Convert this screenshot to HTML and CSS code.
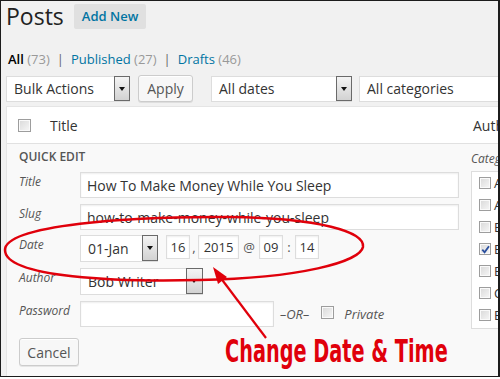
FILE: index.html
```html
<!DOCTYPE html>
<html lang="en">
<head>
  <meta charset="UTF-8">
  <title>Posts - Quick Edit</title>
  <link rel="stylesheet" href="styles.css">
</head>
<body>

  <div class="frame">
    <div class="wrap">

      <div class="page-title">
        <h2>Posts</h2>
        <a class="add-new" href="#">Add New</a>
      </div>

      <ul class="subsubsub">
        <li class="current">All <span class="count">(73)</span></li>
        <li class="sep">|</li>
        <li><a href="#">Published</a> <span class="count">(27)</span></li>
        <li class="sep">|</li>
        <li><a href="#">Drafts</a> <span class="count">(46)</span></li>
      </ul>

      <div class="tablenav">
        <div class="select bulk"><span class="val">Bulk Actions</span><span class="drop"></span></div>
        <button class="button apply">Apply</button>
        <div class="select dates"><span class="val">All dates</span><span class="drop"></span></div>
        <div class="select cats"><span class="val">All categories</span></div>
      </div>

      <div class="posts-table">
        <div class="thead">
          <span class="cb"></span>
          <span class="col-title">Title</span>
          <span class="col-author">Author</span>
        </div>

        <div class="quick-edit">
          <div class="qe-left">
            <h4>Quick Edit</h4>

            <div class="qe-row">
              <label>Title</label>
              <input class="field wide" type="text" value="How To Make Money While You Sleep">
            </div>
            <div class="qe-row">
              <label>Slug</label>
              <input class="field wide" type="text" value="how-to-make-money-while-you-sleep">
            </div>
            <div class="qe-row tall date-row">
              <label>Date</label>
              <div class="select month"><span class="val">01-Jan</span><span class="drop"></span></div>
              <input class="field tiny day" type="text" value="16">
              <span class="punct comma">,</span>
              <input class="field tiny year" type="text" value="2015">
              <span class="punct at">@</span>
              <input class="field tiny" type="text" value="09">
              <span class="punct colon">:</span>
              <input class="field tiny" type="text" value="14">
            </div>
            <div class="qe-row tall">
              <label>Author</label>
              <div class="select author"><span class="val">Bob Writer</span><span class="drop"></span></div>
            </div>
            <div class="qe-row pass-row">
              <label>Password</label>
              <input class="field pass" type="text" value="">
              <em class="or">&ndash;OR&ndash;</em>
              <span class="cb"></span>
              <em class="private">Private</em>
            </div>

            <button class="button cancel">Cancel</button>
          </div>

          <div class="qe-right">
            <span class="qe-label">Categories</span>
            <ul class="cat-list">
              <li><span class="cb"></span>Affiliate Marketing</li>
              <li><span class="cb"></span>Articles</li>
              <li><span class="cb"></span>Blogging</li>
              <li><span class="cb checked"><svg viewBox="0 0 12 12" width="11" height="11"><path d="M2.5 6.2 L5 9 L9.8 2.4" fill="none" stroke="#2a4f9e" stroke-width="2"/></svg></span>Business</li>
              <li><span class="cb"></span>Books</li>
              <li><span class="cb"></span>Content</li>
              <li><span class="cb"></span>Beginners</li>
            </ul>
          </div>
        </div>
      </div>

    </div>

    <!-- red annotation drawn over the screenshot -->
    <svg class="annotation" width="500" height="379" viewBox="0 0 500 379">
      <path d="M5 250 C5 225, 130 216, 230 217 C320 218, 365 232, 363 247 C360 262, 300 278, 200 280 C120 282, 5 278, 5 250 Z"
            fill="none" stroke="#e0000b" stroke-width="2.5"/>
      <line x1="220" y1="277" x2="266" y2="338" stroke="#e0000b" stroke-width="2.2"/>
      <polygon points="213,267 227,277 218,284" fill="#e0000b"/>
    </svg>
    <div class="callout">Change Date &amp; Time</div>
  </div>

</body>
</html>
```

FILE: styles.css
```css
body {
  margin: 0;
  background: #fff;
  font-family: "Open Sans", "Liberation Sans", sans-serif;
  color: #333;
}

.frame {
  position: relative;
  width: 500px;
  height: 377px;
  box-sizing: border-box;
  border: 1px solid #1c1c1c;
  border-right-width: 2px;
  background: #f1f1f1;
  overflow: hidden;
}

.wrap {
  padding-left: 5px;
}

/* page title */
.page-title {
  display: flex;
  align-items: center;
  height: 30px;
}

.page-title h2 {
  margin: 0;
  font-size: 23px;
  font-weight: 400;
  line-height: 30px;
  color: #222;
}

.add-new {
  margin-left: 10px;
  padding: 0 8px;
  height: 25px;
  line-height: 25px;
  background: #e0e0e0;
  border-radius: 2px;
  font-size: 13px;
  font-weight: 600;
  color: #0074a2;
  text-decoration: none;
}

/* views */
.subsubsub {
  display: flex;
  margin: 18px 0 0 2px;
  padding: 0;
  list-style: none;
  font-size: 13px;
  line-height: 20px;
  color: #666;
}

.subsubsub li.current {
  color: #000;
  font-weight: 600;
}

.subsubsub li.current .count {
  font-weight: 400;
}

.subsubsub a {
  color: #0074a2;
  text-decoration: none;
}

.subsubsub .count {
  color: #999;
}

.subsubsub .sep {
  margin: 0 7px;
  color: #666;
}

/* toolbar */
.tablenav {
  display: flex;
  align-items: flex-end;
  margin-top: 6px;
  height: 27px;
}

.tablenav > * {
  flex: none;
}

.select {
  display: flex;
  box-sizing: border-box;
  height: 26px;
  background: #fff;
  border: 1px solid #ddd;
  border-right: none;
  font-size: 14px;
  color: #333;
}

.select .val {
  flex: 1;
  padding-left: 7px;
  line-height: 24px;
  white-space: nowrap;
}

.drop {
  position: relative;
  flex: none;
  width: 16px;
  margin-top: -1px;
  box-sizing: border-box;
  border: 1px solid #6a6a6a;
  background: linear-gradient(#f4f4f4, #d2d2d2);
}

.drop::after {
  content: "";
  position: absolute;
  left: 4px;
  top: 50%;
  margin-top: -2px;
  border-left: 3px solid transparent;
  border-right: 3px solid transparent;
  border-top: 4px solid #111;
}

.bulk { width: 124px; }
.dates { width: 141px; margin-left: 18px; }
.cats { width: 200px; margin-left: 7px; }

.button {
  box-sizing: border-box;
  padding: 0;
  background: #f7f7f7;
  border: 1px solid #ccc;
  border-radius: 3px;
  box-shadow: inset 0 1px 0 #fff, 0 1px 0 rgba(0,0,0,0.08);
  font-family: "Open Sans", "Liberation Sans", sans-serif;
  font-size: 14px;
  color: #555;
}

.apply {
  width: 55px;
  height: 27px;
  margin-left: 8px;
}

/* posts table */
.posts-table {
  margin-top: 4px;
  width: 720px;
  background: #fff;
  border: 1px solid #e5e5e5;
  border-bottom: none;
}

.thead {
  display: flex;
  align-items: center;
  height: 36px;
  border-bottom: 1px solid #e1e1e1;
  font-size: 14px;
  color: #333;
}

.thead .cb {
  margin-left: 11px;
}

.col-title {
  flex: none;
  width: 423px;
  margin-left: 19px;
}

.cb {
  display: inline-block;
  flex: none;
  position: relative;
  width: 13px;
  height: 13px;
  box-sizing: border-box;
  border: 1px solid #9d9d9d;
  box-shadow: inset 0 0 0 1px #fafafa;
  background: linear-gradient(135deg, #d9d9d9, #f7f7f7);
}

.cb svg {
  position: absolute;
  left: 0;
  top: 0;
}

/* quick edit */
.quick-edit {
  display: flex;
  height: 240px;
  padding: 5px 0 0 12px;
  background: #f9f9f9;
}

.qe-left {
  flex: none;
  width: 440px;
}

.qe-left h4 {
  margin: 0 0 7px;
  font-size: 12px;
  font-weight: 600;
  line-height: 16px;
  text-transform: uppercase;
  color: #555;
}

.qe-row {
  display: flex;
  align-items: flex-start;
  height: 26px;
  margin-bottom: 6px;
}

.qe-row.tall {
  height: 27px;
}

.qe-row:nth-of-type(2) {
  margin-bottom: 5px;
}

.pass-row {
  margin-bottom: 11px;
}

.qe-row label,
.qe-label {
  width: 61px;
  flex: none;
  padding-top: 2px;
  font-size: 12px;
  font-style: italic;
  line-height: 16px;
  color: #555;
}

.field {
  box-sizing: border-box;
  height: 26px;
  margin: 0;
  padding: 0 6px;
  background: #fff;
  border: 1px solid #ddd;
  box-shadow: inset 0 1px 2px rgba(0,0,0,0.07);
  font-family: "Open Sans", "Liberation Sans", sans-serif;
  font-size: 14px;
  color: #333;
  outline: none;
}

.field.wide {
  flex: 1;
  min-width: 0;
}

.field.tiny {
  flex: none;
  width: 24px;
  height: 24px;
  padding: 0;
  text-align: center;
  font-size: 13px;
}

.field.year {
  width: 41px;
}

.select.month {
  flex: none;
  width: 78px;
  height: 27px;
}

.select.author {
  flex: none;
  width: 123px;
  height: 27px;
}

.select.author .drop {
  width: 17px;
}

.select.month .val,
.select.author .val {
  line-height: 25px;
}

.day {
  margin-left: 8px;
}

.punct {
  flex: none;
  line-height: 24px;
  font-size: 13px;
  color: #555;
  text-align: center;
}

.comma { width: 8px; }
.at { width: 20px; }
.colon { width: 12px; }

.field.pass {
  flex: none;
  width: 194px;
}

.or,
.private {
  font-size: 13px;
  line-height: 26px;
  color: #555;
}

.or {
  margin: 0 12px 0 6px;
}

.pass-row .cb {
  margin-top: 5px;
}

.private {
  margin-left: 10px;
}

.cancel {
  width: 60px;
  height: 28px;
}

.qe-right {
  flex: none;
  margin-left: 12px;
}

.qe-label {
  display: block;
  width: auto;
}

.cat-list {
  width: 200px;
  height: 158px;
  box-sizing: border-box;
  margin: 4px 0 0;
  padding: 5px 0 0 7px;
  list-style: none;
  background: #fff;
  border: 1px solid #ddd;
  font-size: 13px;
  color: #333;
}

.cat-list li {
  display: flex;
  align-items: flex-start;
  height: 22px;
  line-height: 13px;
  white-space: nowrap;
}

.cat-list .cb {
  width: 12px;
  height: 12px;
  margin-right: 3px;
}

/* red callout text */
.callout {
  position: absolute;
  left: 224px;
  top: 334px;
  font-family: "DejaVu Sans Condensed", "DejaVu Sans", sans-serif;
  font-weight: bold;
  font-size: 32px;
  line-height: 1;
  color: #e0000b;
  white-space: nowrap;
  transform: scaleX(0.67);
  transform-origin: left top;
}

.annotation {
  position: absolute;
  left: -1px;
  top: -1px;
  pointer-events: none;
}
```
